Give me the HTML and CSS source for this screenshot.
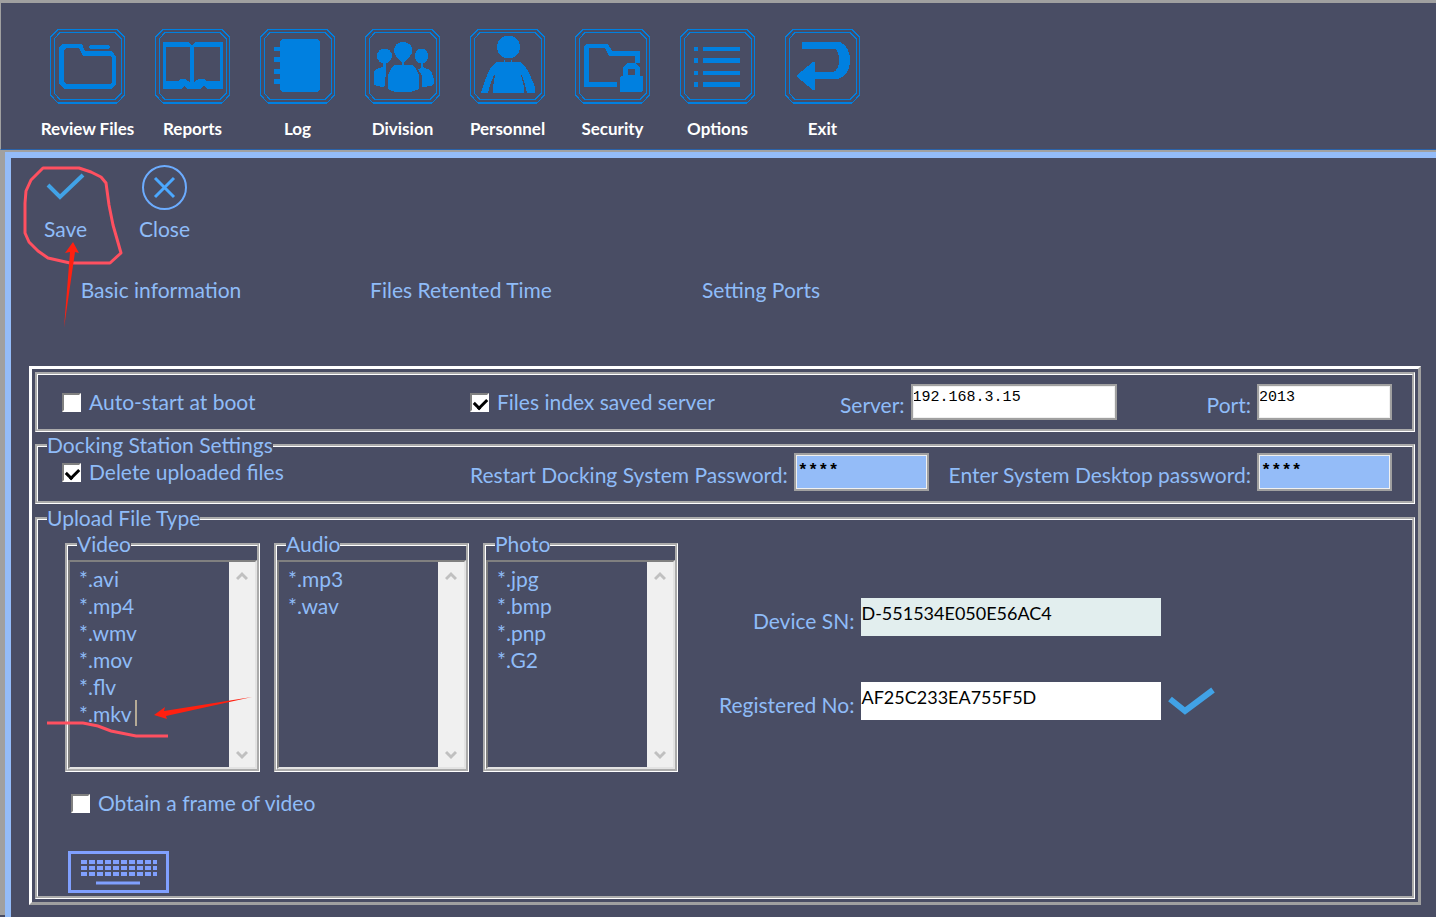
FILE: index.html
```html
<!doctype html>
<html lang="en">
<head>
  <meta charset="UTF-8">
  <meta name="viewport" content="width=device-width, initial-scale=1">
  <title>Options</title>
  <link rel="stylesheet" href="styles.css">
</head>
<body>
  <svg class="defs" width="0" height="0">
    <symbol id="frame" viewBox="0 0 75 75">
      <path d="M8 .5H67L74.500 8V66L67 74H8L.5 66V8Z M10 3.500H65L71.500 10V64L65 70.500H10L4 64V10Z" fill="none" stroke="#0080e0"/>
      <path d="M8 74H67" stroke="#0080e0" stroke-width="2"/>
    </symbol>
  </svg>

  <header>
    <nav id="toolbar">
      <button class="tool">
        <svg viewBox="0 0 75 75"><use href="#frame"/>
          <path fill-rule="evenodd" d="M12 15H32L35 22H62L66 28V55L62 60H15L9 55V19ZM16 19L14 21V53L16 55H60L62 53V29L60 27H33L29 19Z"/>
          <path d="M40 16H58L60 18L58 20H40L38 18Z"/>
        </svg>
        <span>Review Files</span>
      </button>
      <button class="tool">
        <svg viewBox="0 0 75 75"><use href="#frame"/>
          <path fill-rule="evenodd" d="M8 13H33L37 16L41 13H68V60H53L49 57L45 60H33L29 57L26 60H8ZM11 18V52H23L26 50H30L35 53V18ZM39 18V53L44 50H49L52 52H65V18Z"/>
        </svg>
        <span>Reports</span>
      </button>
      <button class="tool">
        <svg viewBox="0 0 75 75"><use href="#frame"/>
          <rect x="20" y="10" width="40" height="53" rx="4"/>
          <path d="M14 18H21V22H14ZM14 28H21V33H14ZM14 40H21V45H14ZM14 50H21V55H14Z"/>
        </svg>
        <span>Log</span>
      </button>
      <button class="tool">
        <svg viewBox="0 0 75 75"><use href="#frame"/>
          <path d="M38 13C44 13 47.500 17 47.500 22C47 27 42 29 39 34V37H37V34C34 29 29 27 29 22C29 17 32 13 38 13Z"/>
          <path d="M30 36H47Q52 39 54 47V60L46 63H30L23 60V47Q25 39 30 36Z"/>
          <ellipse cx="19.500" cy="27" rx="7.500" ry="7.500"/>
          <ellipse cx="56.500" cy="27" rx="6.500" ry="7.500"/>
          <path d="M18 34H21V39L20 57L17 58L9 56V43Q11 39 18 38Z"/>
          <path d="M56 34H58V38L65 41Q69 46 69 54L66 57L57 58V47L53 40L56 39Z"/>
        </svg>
        <span>Division</span>
      </button>
      <button class="tool">
        <svg viewBox="0 0 75 75"><use href="#frame"/>
          <circle cx="38.500" cy="18" r="11.500"/>
          <path d="M27 33H34V31H35V33H41V31H42V33H50Q57 38 60 46L65 58V64H57L55 56L52 46H51L54 58V64H23V58L25 46H24L20 56L18 64H11L16 49Q19 38 27 33Z"/>
        </svg>
        <span>Personnel</span>
      </button>
      <button class="tool">
        <svg viewBox="0 0 75 75"><use href="#frame"/>
          <path d="M11 15H33L37 22H65V34H60V27H34L30 19H14V53H42V58H9V17Z"/>
          <rect x="45" y="47" width="23" height="16" rx="2"/>
          <path fill-rule="evenodd" d="M48 48V38L53 34H60L65 38V48ZM53 40V46H60V40Z"/>
        </svg>
        <span>Security</span>
      </button>
      <button class="tool">
        <svg viewBox="0 0 75 75"><use href="#frame"/>
          <path d="M14 18H18V22H14ZM23 18H60V22H23ZM14 29H18V34H14ZM23 29H60V34H23ZM14 42H18V46H14ZM23 42H60V46H23ZM14 53H18V58H14ZM23 53H60V58H23Z"/>
        </svg>
        <span>Options</span>
      </button>
      <button class="tool">
        <svg viewBox="0 0 75 75"><use href="#frame"/>
          <path d="M17 13H55Q65 18 65 31Q65 46 53 50H30V61H28L12 48V46L28 33H30V43H48Q54 41 54 31Q54 22 50 20H17Z"/>
        </svg>
        <span>Exit</span>
      </button>
    </nav>
  </header>

  <main id="main">
    <div id="actions">
      <button class="action">
        <svg viewBox="0 0 46 46"><path d="M5 20L17 32L40 10" fill="none" stroke="#41a2e6" stroke-width="4"/></svg>
        <span>Save</span>
      </button>
      <button class="action">
        <svg viewBox="0 0 46 46">
          <circle cx="22.500" cy="22.500" r="21.500" fill="none" stroke="#6cacff" stroke-width="2"/>
          <path d="M13 13L32 32M32 13L13 32" stroke="#4ba8ff" stroke-width="3"/>
        </svg>
        <span>Close</span>
      </button>
      <svg class="mark mark-save" viewBox="0 0 110 180">
        <path d="M60 5H24L12 17L7 28L6 40V70L10 79L19 88L29 95L51 100H91L102 90L100 83L94 62L90 42L87 20L82 14L72 9L60 5Z" fill="none" stroke="#ff5060" stroke-width="3" stroke-linejoin="round"/>
        <path d="M54 79L46 90L51 89L45 165L56 89L60 90Z" fill="#ff2010"/>
      </svg>
    </div>

    <nav id="tabs">
      <button>Basic information</button>
      <button>Files Retented Time</button>
      <button>Setting Ports</button>
    </nav>

    <form id="settings">
      <fieldset class="group">
        <div class="row">
          <label class="check first"><input type="checkbox">Auto-start at boot</label>
          <label class="check"><input type="checkbox" checked>Files index saved server</label>
          <label class="field push"><span>Server:</span><input class="server" type="text" value="192.168.3.15"></label>
          <label class="field port"><span>Port:</span><input type="text" value="2013"></label>
        </div>
      </fieldset>

      <fieldset class="group docking">
        <legend>Docking Station Settings</legend>
        <div class="row">
          <label class="check first"><input type="checkbox" checked>Delete uploaded files</label>
          <label class="field"><span>Restart Docking System Password:</span><input class="pass" type="text" value="****"></label>
          <label class="field push"><span>Enter System Desktop password:</span><input class="pass" type="text" value="****"></label>
        </div>
      </fieldset>

      <fieldset class="group upload">
        <legend>Upload File Type</legend>
        <div class="columns">
          <div class="left">
            <div class="lists">
              <fieldset class="types">
                <legend>Video</legend>
                <div class="listbox">
                  <textarea aria-label="Video">*.avi
*.mp4
*.wmv
*.mov
*.flv
*.mkv</textarea>
                  <div class="scroll">
                    <svg viewBox="0 0 12 10"><path d="M1 8L6 3L11 8"/></svg>
                    <svg viewBox="0 0 12 10"><path d="M1 2L6 7L11 2"/></svg>
                  </div>
                </div>
                <svg class="mark mark-type" viewBox="0 0 210 50">
                  <path d="M1 28H37L52 31L65 36L90 41H122" fill="none" stroke="#ff5060" stroke-width="3"/>
                  <path d="M90 5V31" stroke="#b5aa96" stroke-width="2"/>
                  <path d="M108 20L119 12L118 16L206 2L120 21L121 24Z" fill="#ff2010"/>
                </svg>
              </fieldset>
              <fieldset class="types">
                <legend>Audio</legend>
                <div class="listbox">
                  <textarea aria-label="Audio">*.mp3
*.wav</textarea>
                  <div class="scroll">
                    <svg viewBox="0 0 12 10"><path d="M1 8L6 3L11 8"/></svg>
                    <svg viewBox="0 0 12 10"><path d="M1 2L6 7L11 2"/></svg>
                  </div>
                </div>
              </fieldset>
              <fieldset class="types">
                <legend>Photo</legend>
                <div class="listbox">
                  <textarea aria-label="Photo">*.jpg
*.bmp
*.pnp
*.G2</textarea>
                  <div class="scroll">
                    <svg viewBox="0 0 12 10"><path d="M1 8L6 3L11 8"/></svg>
                    <svg viewBox="0 0 12 10"><path d="M1 2L6 7L11 2"/></svg>
                  </div>
                </div>
              </fieldset>
            </div>
            <label class="check frame"><input type="checkbox">Obtain a frame of video</label>
            <button type="button" id="keyboard" aria-label="Keyboard">
              <svg viewBox="0 0 78 26">
                <path d="M1 3H77M1 9H77M1 15H77" stroke-width="4" stroke-dasharray="6 2"/>
                <path d="M16 24H60" stroke-width="3"/>
              </svg>
            </button>
          </div>

          <div class="device">
            <label for="sn">Device SN:</label>
            <input id="sn" type="text" value="D-551534E050E56AC4" readonly>
            <span></span>
            <label for="reg">Registered No:</label>
            <input id="reg" type="text" value="AF25C233EA755F5D">
            <button type="button" class="confirm" aria-label="Register">
              <svg viewBox="0 0 48 28"><path d="M2 12L17 24L45 3" fill="none" stroke="#41a2e6" stroke-width="6"/></svg>
            </button>
          </div>
        </div>
      </fieldset>
    </form>
  </main>
</body>
</html>
```
FILE: styles.css
```css
*{
  box-sizing: border-box;
}
body{
  margin: 0;
  min-height: 100vh;
  display: flex;
  flex-direction: column;
  background-color: #494d64;
  color: #8fbcf8;
  font-family: Lato, "Liberation Sans", sans-serif;
  font-size: 21px;
  line-height: 24px;
}
button{
  padding: 0;
  border: 0;
  background: none;
  color: inherit;
  font: inherit;
  cursor: pointer;
}
svg{
  display: block;
}
.defs{
  position: absolute;
}

/* top toolbar */
header{
  border-top: 3px solid #a0a0a0;
  border-left: 1px solid #a0a0a0;
  border-bottom: 1px solid #2a62a8;
  padding: 26px 34px 8px;
}
#toolbar{
  display: flex;
}
.tool{
  width: 105px;
  display: flex;
  flex-direction: column;
  align-items: center;
  gap: 13px;
  color: #fff;
  font-size: 17px;
  font-weight: bold;
  white-space: nowrap;
}
.tool svg{
  width: 75px;
  height: 75px;
  fill: #0080e0;
  shape-rendering: crispEdges;
}

/* page */
#main{
  flex: 1;
  border-top: 6px solid #94bcf8;
  border-left: 6px solid #94bcf8;
  margin-left: 5px;
  box-shadow: -5px -2px 0 #a0a0a0, 0 -2px 0 #a0a0a0;
  margin-top: 2px;
  padding: 7px 15px 12px 0;
}
#actions{
  position: relative;
  display: flex;
  padding-left: 5px;
}
.action{
  width: 99px;
  display: flex;
  flex-direction: column;
  align-items: center;
  gap: 6px;
}
.action svg{
  width: 46px;
  height: 46px;
}
#tabs{
  display: grid;
  grid-template-columns: repeat(3, 300px);
  margin-top: 37px;
}

/* red pen marks */
.mark{
  position: absolute;
  pointer-events: none;
}
.mark-save{
  width: 110px;
  height: 180px;
  left: 8px;
  top: -2px;
}
.mark-type{
  width: 210px;
  height: 50px;
  left: -22px;
  top: 139px;
}

/* settings */
#settings{
  margin: 64px 0 0 18px;
  padding: 3px;
  border: 3px solid;
  border-color: #fff #a0a0a0 #a0a0a0 #fff;
}
fieldset{
  margin: 0;
  padding: 0;
  min-width: 0;
  border: 3px groove #fff;
}
legend{
  padding: 0;
  margin-left: 9px;
}
.docking{
  margin-top: 1px;
}
.upload{
  margin-top: 2px;
}
.row{
  display: flex;
  align-items: center;
  height: 54px;
  padding: 0 20px 0 24px;
}
.docking .row{
  height: 44px;
  padding-bottom: 14px;
}
.check{
  display: flex;
  align-items: center;
  gap: 8px;
}
.first{
  width: 408px;
}
.push{
  margin-left: auto;
}
.port{
  margin-left: 90px;
}
input[type=checkbox]{
  appearance: none;
  width: 19px;
  height: 19px;
  margin: 0;
  border: 2px solid;
  border-color: #808080 #fff #fff #808080;
  background-color: #fff;
}
input[type=checkbox]:checked::before{
  content: "";
  display: block;
  width: 10px;
  height: 6px;
  margin: 3px 2px;
  border-left: 3px solid #000;
  border-bottom: 3px solid #000;
  transform: rotate(-45deg);
}
.field{
  display: flex;
  align-items: center;
  gap: 6px;
  white-space: nowrap;
}
.field span{
  padding-top: 6px;
}
.field input{
  width: 135px;
  height: 36px;
  padding: 0 0 9px;
  border: 2px solid #a0a0a0;
  outline: 1px solid #f0f0f0;
  outline-offset: -3px;
  background-color: #fff;
  font-family: "Liberation Mono", monospace;
  font-size: 15px;
}
.field .server{
  width: 206px;
}
.field .pass{
  height: 38px;
  padding: 0 2px 4px;
  background-color: #94bcf8;
  font-size: 17px;
  font-weight: bold;
}

/* file types */
.columns{
  display: flex;
  padding: 2px 0 3px;
}
.left{
  margin-left: 27px;
}
.lists{
  display: flex;
  gap: 14px;
}
.types{
  position: relative;
  width: 195px;
}
.listbox{
  display: flex;
  height: 209px;
  margin-top: 4px;
  border: 2px solid;
  border-color: #808080 #e3e3e3 #e3e3e3 #808080;
}
.listbox textarea{
  flex: 1;
  min-width: 0;
  padding: 3px 9px;
  border: 0;
  background: none;
  color: inherit;
  font: inherit;
  line-height: 27px;
  resize: none;
  overflow: hidden;
}
.scroll{
  width: 26px;
  display: flex;
  flex-direction: column;
  justify-content: space-between;
  align-items: center;
  padding: 9px 0 7px;
  background-color: #f0f0f0;
}
.scroll svg{
  width: 12px;
  height: 10px;
  fill: none;
  stroke: #c0c0c0;
  stroke-width: 3;
}
.frame{
  margin: 19px 0 0 6px;
}
#keyboard{
  display: flex;
  justify-content: center;
  width: 101px;
  height: 42px;
  margin: 36px 0 0 3px;
  padding-top: 5px;
  border: 3px solid #80a0ff;
}
#keyboard svg{
  width: 78px;
  height: 26px;
  stroke: #80a0ff;
}
.device{
  display: grid;
  grid-template-columns: auto 300px auto;
  grid-auto-rows: 38px;
  gap: 46px 7px;
  align-items: center;
  align-content: start;
  margin: 66px 0 0 41px;
}
.device label{
  text-align: right;
  padding-top: 8px;
}
.device input{
  height: 38px;
  padding: 0 0 8px;
  border: 0;
  background-color: #fff;
  font: inherit;
  font-size: 18px;
  color: #000;
}
.device input[readonly]{
  background-color: #e2eeee;
}
.confirm svg{
  width: 48px;
  height: 28px;
}
```
